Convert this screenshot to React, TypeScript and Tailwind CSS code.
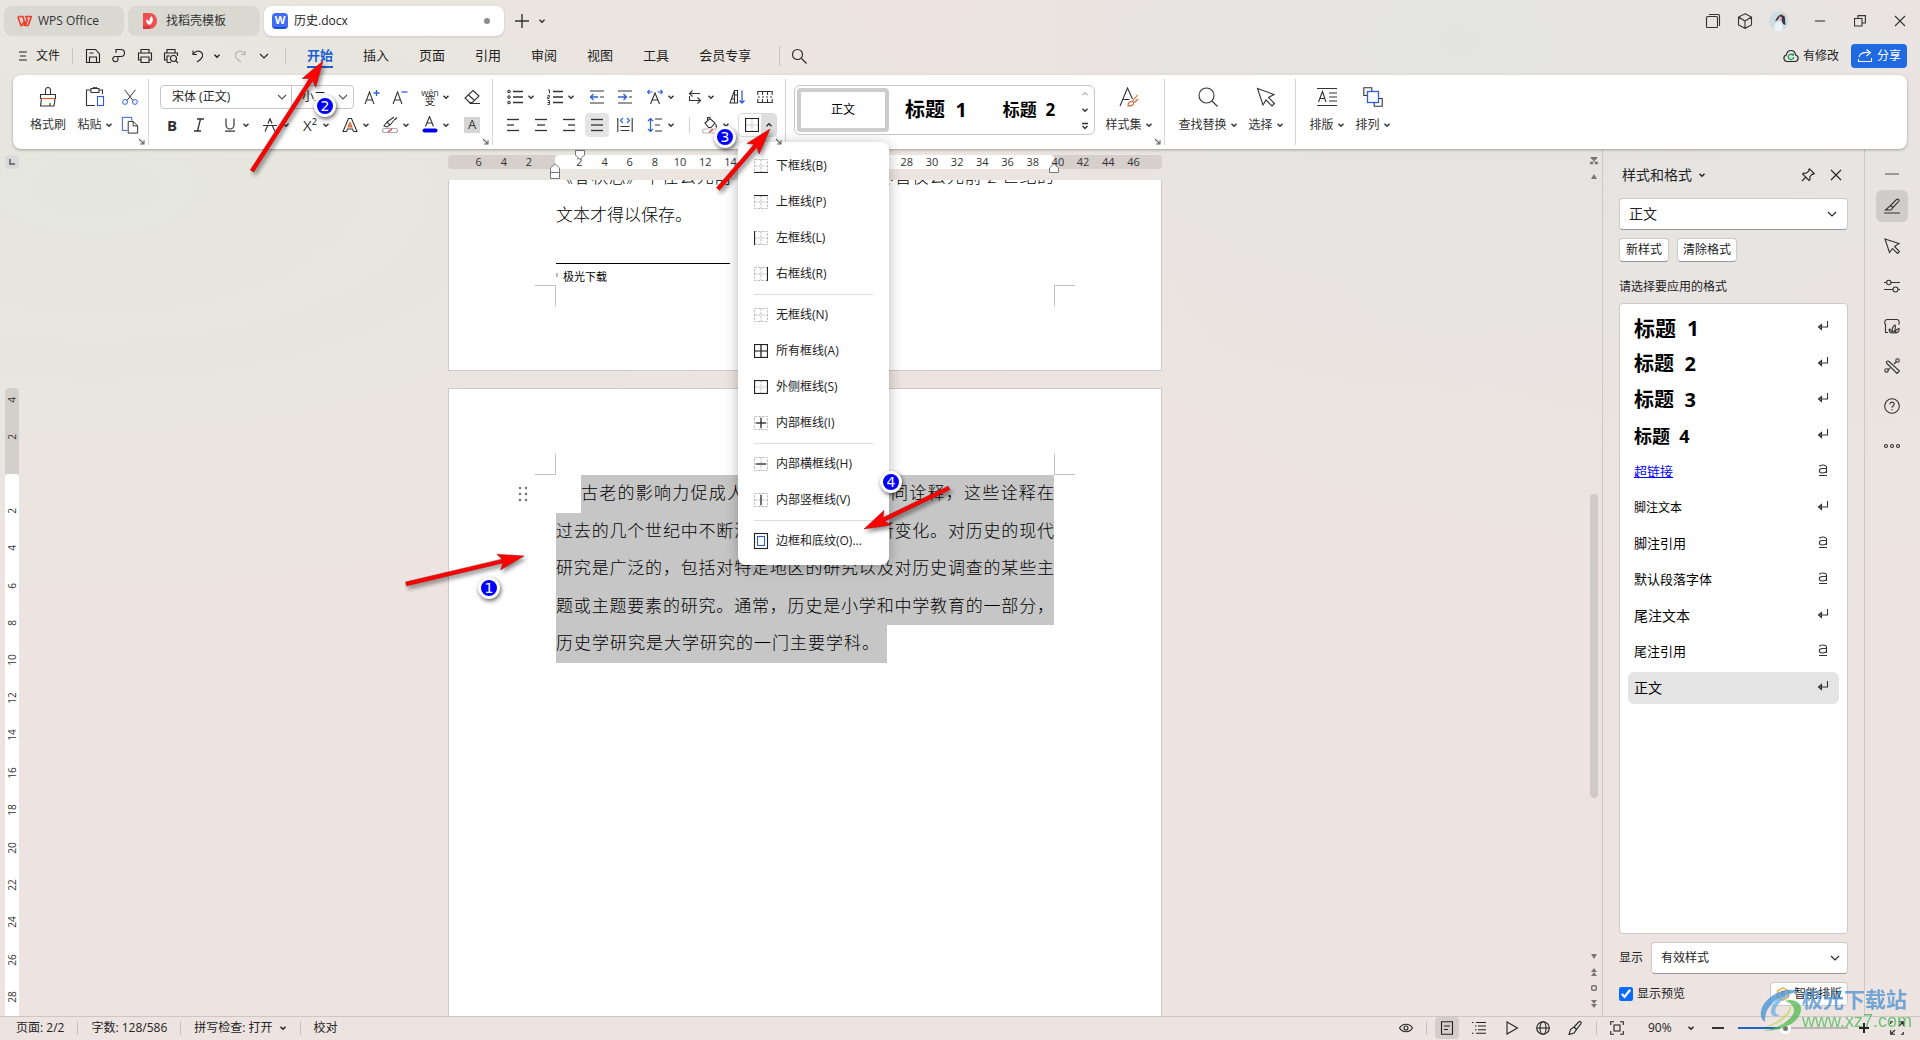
import type { ReactNode } from "react"
import clsx from "clsx"

interface IconProps {
  children: ReactNode
  size?: number
  box?: number
  className?: string
}

function Icon({ children, size = 20, box = 20, className }: IconProps) {
  return (
    <svg
      width={size}
      height={size}
      viewBox={`0 0 ${box} ${box}`}
      fill="none"
      stroke="currentColor"
      strokeWidth={1.1}
      className={clsx("shrink-0", className)}
      aria-hidden="true"
    >
      {children}
    </svg>
  )
}

function Chevron({ up = false, className }: { up?: boolean; className?: string }) {
  return (
    <Icon size={8} box={8} className={className}>
      <path d={up ? "M1.5 5.2 4 2.8 6.5 5.2" : "M1.5 2.8 4 5.2 6.5 2.8"} strokeWidth={1.5} />
    </Icon>
  )
}

function WideChevron({ className }: { className?: string }) {
  return (
    <Icon size={10} box={10} className={className}>
      <path d="M1 3 5 7 9 3" />
    </Icon>
  )
}

const BLUE = "#2b5fd9"

/* ---------- title bar ---------- */

function TitleBar() {
  return (
    <header className="flex h-10 shrink-0 items-center justify-between pl-1 pr-3 pt-px text-xs text-[#333]">
      <div className="flex items-center gap-1">
        <button className="flex h-[30px] w-[120px] items-center gap-1 rounded-lg bg-[#d9d9d2] pl-3">
          <Icon size={18} className="text-[#f5382c]">
            <path d="M3 5h4.500l3 9 2-5-1.500-4h6l-3.500 10H10L8.500 11 7 15H5.500L2 5" strokeWidth={1.8} strokeLinejoin="round" />
          </Icon>
          WPS Office
        </button>
        <button className="flex h-[30px] w-[132px] items-center gap-2 rounded-lg bg-[#d9d9d2] pl-[14px]">
          <Icon size={16} box={16}>
            <path d="M1 0h6.500a7.500 8 0 0 1 0 16H1z" fill="#f04d52" stroke="none" />
            <path d="M1 13h8l-2 3H1z" fill="#d93440" stroke="none" />
            <path d="M8 12C4.500 11 4 8.500 4.500 6.500 6 7 7.500 8 7.500 10 7 7.500 7.500 4.500 9.500 3c2 2.500 2 6-1.500 9Z" fill="#fff" stroke="none" />
          </Icon>
          找稻壳模板
        </button>
        <button className="flex h-[30px] w-[240px] items-center rounded-lg bg-white pl-2 pr-[14px] text-[#222] shadow-sm">
          <span className="flex size-4 items-center justify-center rounded-sm border-b-2 border-[#1d4fd0] bg-[#3f6cf6] text-[11px] font-bold leading-none text-white">
            W
          </span>
          <span className="ml-[6px] flex-1 text-left">历史.docx</span>
          <span className="size-[6px] rounded-full bg-[#8c8c8c]" />
        </button>
        <button aria-label="新建标签" className="ml-[2px] flex h-6 w-6 items-center justify-center">
          <Icon size={14} box={14}>
            <path d="M7 0v14M0 7h14" strokeWidth={1.4} />
          </Icon>
        </button>
        <button aria-label="标签列表" className="flex h-6 items-center">
          <Chevron />
        </button>
      </div>
      <div className="flex items-center">
        <button aria-label="窗口" className="flex w-8 justify-center">
          <Icon size={16} box={16}>
            <rect x="1.500" y="3.500" width="11" height="11" rx="1" />
            <path d="M4 1.500h9.500a1 1 0 0 1 1 1V13" />
          </Icon>
        </button>
        <button aria-label="应用" className="flex w-8 justify-center">
          <Icon size={16} box={16}>
            <path d="M8 .8 14.500 4v8L8 15.300 1.500 12V4ZM1.500 4 8 8l6.500-4M8 8v7" />
          </Icon>
        </button>
        <button aria-label="账号" className="ml-2 flex justify-center">
          <svg width="20" height="20" viewBox="0 0 20 20" aria-hidden="true">
            <circle cx="10" cy="10" r="10" fill="#cfdde3" />
            <path d="M5 19c0-5 2-8 6-9l2 4 1 5c-3 1.500-6 1.500-9 0Z" fill="#eaf4f6" />
            <path d="M10 4.500c2.500-2 6-.5 6 3l.5 6.500-2.500-1-1.500-4-2-2.500-2.500 3-2 1c1-2.500 2-4.500 4-6Z" fill="#3b3344" />
            <path d="M10 6c1.500-1 3 0 3 1.500L12 10l-2-.5Z" fill="#e0b7ab" />
            <path d="M12 3.500c1.500-.8 3-.2 3.500 1l-1.500.5Z" fill="#d8b056" />
          </svg>
        </button>
        <button aria-label="最小化" className="ml-[21px] flex w-5 justify-center">
          <Icon size={12} box={12}>
            <path d="M1 6h10" />
          </Icon>
        </button>
        <button aria-label="还原" className="ml-5 flex w-5 justify-center">
          <Icon size={12} box={12}>
            <path d="M.5 3.500h7.500v7.500H.5ZM4 3.500V.6h7.400V8H8" />
          </Icon>
        </button>
        <button aria-label="关闭" className="ml-5 mr-[-2px] flex w-5 justify-center">
          <Icon size={12} box={12}>
            <path d="m1 1 10 10M11 1 1 11" />
          </Icon>
        </button>
      </div>
    </header>
  )
}

/* ---------- menu bar ---------- */

const menus = ["开始", "插入", "页面", "引用", "审阅", "视图", "工具", "会员专享"]

function MenuBar() {
  return (
    <nav className="flex h-[35px] shrink-0 items-center justify-between pb-[4px] pl-[18px] pr-[13px] text-xs text-[#222]">
      <div className="flex items-center">
        <button className="flex items-center gap-2">
          <Icon size={10} box={10}>
            <path d="M1 1h8M2 5h6M1 9h8" />
          </Icon>
          文件
        </button>
        <span className="ml-3 h-4 w-px bg-[#c8c6c2]" />
        <div className="ml-3 flex items-center gap-[10px]">
          <button aria-label="保存">
            <Icon size={16} box={16}>
              <path d="M1.500 1.500h9L14.500 6v8.500h-13ZM4.500 14V9h7v5M4.500 5h4" />
            </Icon>
          </button>
          <button aria-label="输出为PDF">
            <Icon size={16} box={16}>
              <path d="M5 5V1.500h5a3.500 3.500 0 0 1 0 7H7v2.700A2.600 2.600 0 1 1 4.400 8.500H7" />
            </Icon>
          </button>
          <button aria-label="打印">
            <Icon size={16} box={16}>
              <path d="M4 5V1.500h8V5M4 12H1.500V5h13v7H12M4 9h8v5.500H4Z" />
            </Icon>
          </button>
          <button aria-label="打印预览">
            <Icon size={16} box={16}>
              <path d="M4 5V1.500h8V5M4 12H1.500V5h13v3M4 14.500V8h3M4 14.500h4" />
              <circle cx="10.500" cy="10.500" r="3" />
              <path d="m12.800 12.800 2.200 2.200" />
            </Icon>
          </button>
        </div>
        <button aria-label="撤销" className="ml-3 flex items-center gap-2">
          <Icon size={14} box={14}>
            <path d="M2 1.500v4h4M2 5.500C4 2 8 1 10.500 3.500S12 9 6 13" />
          </Icon>
          <Chevron />
        </button>
        <button aria-label="恢复" className="ml-3 text-[#b5b3b0]">
          <Icon size={14} box={14}>
            <path d="M12 1.500v4H8M12 5.500C10 2 6 1 3.500 3.500S2 9 8 13" />
          </Icon>
        </button>
        <button aria-label="更多" className="ml-3">
          <WideChevron />
        </button>
        <span className="ml-4 h-4 w-px bg-[#c8c6c2]" />
        <div className="ml-[21px] flex gap-[30px] text-[13px]">
          {menus.map((name, i) => (
            <button
              key={name}
              className={clsx(
                "h-6 border-b-2 leading-[22px]",
                i === 0 ? "border-[#1d5fd0] font-bold text-[#1d5fd0]" : "border-transparent"
              )}
            >
              {name}
            </button>
          ))}
        </div>
        <span className="ml-[28px] h-5 w-px bg-[#c8c6c2]" />
        <button aria-label="搜索" className="ml-[11px]">
          <Icon size={16} box={16}>
            <circle cx="6.500" cy="6.500" r="5" />
            <path d="m10.500 10.500 5 5" />
          </Icon>
        </button>
      </div>
      <div className="flex items-center gap-3">
        <button className="flex items-center gap-1">
          <Icon size={16} box={16}>
            <path d="M4 13.500a3.300 3.300 0 0 1-.6-6.500C3.800 4 5.700 2.500 8 2.500S12.200 4 12.600 7A3.300 3.300 0 0 1 12 13.500Z" />
            <path d="M10 7a2.700 2.700 0 1 0 .7 2M8.500 7H10.300V5.200" stroke="#16a05d" strokeWidth={1.3} />
          </Icon>
          有修改
        </button>
        <button className="flex h-6 w-14 items-center justify-center gap-1 rounded bg-[#1f6ae2] text-white">
          <Icon size={16} box={16}>
            <path d="M2 9C3 5.500 6 4 12 4.500M9.500 1.500l4 3-4 3.500M1.500 11v2.500h13V10" />
          </Icon>
          分享
        </button>
      </div>
    </nav>
  )
}

/* ---------- ribbon ---------- */

interface ToolProps {
  label: string
  children: ReactNode
  className?: string
}

function Tool({ label, children, className, narrow = false }: ToolProps & { narrow?: boolean }) {
  return (
    <button aria-label={label} className={clsx("flex h-6 items-center justify-center", narrow ? "w-6" : "w-7", className)}>
      {children}
    </button>
  )
}

function DropTool({ label, children, className }: ToolProps) {
  return (
    <button aria-label={label} className={clsx("flex h-6 w-10 items-center", className)}>
      <span className="flex w-6 justify-center">{children}</span>
      <Chevron />
    </button>
  )
}

function BigTool({ label, children, className, drop = true }: ToolProps & { drop?: boolean }) {
  return (
    <button className={clsx("flex flex-col items-center gap-1", className)}>
      <span className="flex h-6 items-center">{children}</span>
      <span className="flex h-6 items-center gap-[3px] whitespace-nowrap">
        {label}
        {drop && <Chevron />}
      </span>
    </button>
  )
}

function Group({ children, className, launcher = true }: { children: ReactNode; className?: string; launcher?: boolean }) {
  return (
    <div className={clsx("relative my-1 flex border-r border-[#d4d4d4] pt-[6px]", className)}>
      {children}
      {launcher && (
        <button aria-label="更多设置" className="absolute bottom-0 right-[3px] text-[#666]">
          <Icon size={7} box={7}>
            <path d="m1 1 5 5M6 2v4H2" />
          </Icon>
        </button>
      )}
    </div>
  )
}

function Lines({ rows }: { rows: [number, number][] }) {
  return (
    <Icon size={16} box={16}>
      {rows.map(([from, to], i) => (
        <path key={i} d={`M${from} ${2.5 + i * 5.5}H${to}`} strokeWidth={1.3} />
      ))}
    </Icon>
  )
}

type Edge = "b" | "t" | "l" | "r" | "h" | "v"

const edgePaths: Record<Edge, string> = {
  b: "M0 13.500h14",
  t: "M0 .5h14",
  l: "M.5 0v14",
  r: "M13.500 0v14",
  h: "M2 7h10",
  v: "M7 2v10",
}

function BorderIcon({ edges, full = false }: { edges: Edge[]; full?: boolean }) {
  return (
    <Icon size={14} box={14}>
      <path d="M.5.5h13v13H.5ZM.5 7h13M7 .5v13" stroke="#bdbdbd" strokeWidth={1} strokeDasharray="2.500 1.200" />
      {edges.map((edge) => (
        <path key={edge} d={edgePaths[edge]} stroke="#222" strokeWidth={1.2} />
      ))}
      {full && <path d="M7 0v14M0 7h14" stroke="#222" strokeWidth={1.2} />}
    </Icon>
  )
}

interface BorderOption {
  label: string
  edges: Edge[]
  full?: boolean
}

const borderOptions: BorderOption[][] = [
  [
    { label: "下框线(B)", edges: ["b"] },
    { label: "上框线(P)", edges: ["t"] },
    { label: "左框线(L)", edges: ["l"] },
    { label: "右框线(R)", edges: ["r"] },
  ],
  [
    { label: "无框线(N)", edges: [] },
    { label: "所有框线(A)", edges: ["b", "t", "l", "r"], full: true },
    { label: "外侧框线(S)", edges: ["b", "t", "l", "r"] },
    { label: "内部框线(I)", edges: ["h", "v"] },
  ],
  [
    { label: "内部横框线(H)", edges: ["h"] },
    { label: "内部竖框线(V)", edges: ["v"] },
  ],
]

function BorderMenu() {
  return (
    <div
      role="menu"
      className="absolute left-0 top-[29px] w-[151px] rounded-lg bg-white py-[6px] text-xs text-[#222] shadow-[0_2px_14px_rgba(0,0,0,0.28)]"
    >
      {borderOptions.map((section, i) => (
        <div key={i}>
          {section.map((option) => (
            <button key={option.label} role="menuitem" className="flex h-9 w-full items-center gap-2 pl-4">
              <BorderIcon edges={option.edges} full={option.full} />
              {option.label}
            </button>
          ))}
          <hr className="mx-4 my-[2px] border-[#dcdcdc]" />
        </div>
      ))}
      <button role="menuitem" className="flex h-9 w-full items-center gap-2 pl-4">
        <Icon size={14} box={14} className="overflow-visible">
          <rect x=".5" y="-.5" width="13" height="15" stroke="#222" />
          <rect x="3.500" y="2.500" width="7" height="9" stroke={BLUE} />
        </Icon>
        边框和底纹(O)...
      </button>
    </div>
  )
}

function ClipboardGroup() {
  return (
    <Group className="pl-[11px] pr-[6px]">
      <BigTool label="格式刷" drop={false} className="w-12">
        <Icon>
          <path d="M2.500 7.500h15v4h-15ZM7.500 7.500V3a2.500 2.500 0 0 1 5 0v4.500M3.500 11.500 2.500 19h13.500l1-7.500M12 19v-3M5 19" />
          <path d="M3 11.500h14" stroke="#d1622d" />
        </Icon>
      </BigTool>
      <BigTool label="粘贴" className="w-[46px]">
        <Icon>
          <path d="M6 3H1.500v15.500H10M14 3h3.500v4M6 1.500h8v4H6ZM8.500 1.500V.3h3v1.200" />
          <rect x="12.500" y="9.500" width="6" height="9" stroke={BLUE} />
        </Icon>
      </BigTool>
      <div className="flex flex-col gap-1">
        <Tool label="剪切" narrow>
          <Icon size={18}>
            <path d="M4 2 13.500 14M16 2 6.500 14" />
            <circle cx="4.500" cy="15.500" r="2.700" stroke={BLUE} />
            <circle cx="15.500" cy="15.500" r="2.700" stroke={BLUE} />
          </Icon>
        </Tool>
        <Tool label="复制" narrow>
          <Icon size={18}>
            <path d="M7 16H1.500V1.500H12V5" stroke={BLUE} />
            <path d="M8 6h5.500l5 5v8H8ZM13.500 6v5h5" />
          </Icon>
        </Tool>
      </div>
    </Group>
  )
}

function FontGroup() {
  return (
    <Group className="pl-[11px] pr-[6px]">
      <div className="flex flex-col gap-1">
        <div className="flex items-center">
          <div className="flex h-6 rounded border border-[#c6c6c6] text-[#222]">
            <div className="relative w-[131px] border-r border-[#c6c6c6]">
              <select aria-label="字体" className="h-full w-full appearance-none bg-transparent pl-[11px] outline-none">
                <option>宋体 (正文)</option>
              </select>
              <WideChevron className="pointer-events-none absolute right-1 top-[6px] text-[#555]" />
            </div>
            <div className="relative w-[61px]">
              <select aria-label="字号" className="h-full w-full appearance-none bg-transparent pl-[10px] outline-none">
                <option>小二</option>
              </select>
              <WideChevron className="pointer-events-none absolute right-[5px] top-[6px] text-[#555]" />
            </div>
          </div>
          <Tool label="增大字号" className="ml-1">
            <Icon size={16} box={16}>
              <path d="m1 15 4.500-12L10 15M2.500 11h6" />
              <path d="M12.500 1v6M9.500 4h6" stroke={BLUE} strokeWidth={1.3} />
            </Icon>
          </Tool>
          <Tool label="减小字号">
            <Icon size={16} box={16}>
              <path d="m1 15 4.500-12L10 15M2.500 11h6" />
              <path d="M9.500 3h6" stroke={BLUE} strokeWidth={1.3} />
            </Icon>
          </Tool>
          <DropTool label="拼音指南" className="ml-1">
            <span className="flex flex-col items-center leading-none">
              <span className="text-[9px] leading-[7px]">wén</span>
              <span className="text-[11px] leading-[10px]">变</span>
            </span>
          </DropTool>
          <Tool label="清除格式">
            <Icon size={16} box={16}>
              <path d="M9 1.500 15 7l-6.500 6.500H5.500L1 9ZM4 5.500l6.500 6M5.500 14.500H16" />
            </Icon>
          </Tool>
        </div>
        <div className="flex items-center">
          <Tool label="加粗" narrow className="text-[15px] font-bold">B</Tool>
          <Tool label="倾斜" narrow className="ml-[3px]">
            <Icon size={14} box={14}>
              <path d="M5 1h7M2 13h7M8.500 1l-3 12" strokeWidth={1.3} />
            </Icon>
          </Tool>
          <DropTool label="下划线" className="ml-[7px]">
            <Icon size={14} box={14}>
              <path d="M3 .5v6.500a4 4 0 0 0 8 0V.5M2 13.200h10" strokeWidth={1.2} />
            </Icon>
          </DropTool>
          <DropTool label="删除线">
            <Icon size={14} box={14}>
              <path d="M2 13.500 4.500 8M12 13.500 9.500 8M5 5.500 7 .8l2 4.700M0 7.500h14" strokeWidth={1.2} />
            </Icon>
          </DropTool>
          <DropTool label="上标">
            <span className="text-[15px]">X²</span>
          </DropTool>
          <DropTool label="文字效果">
            <Icon size={16} box={16}>
              <path d="M1 14.500 6.500 1.500h3L15 14.500h-3.500L10.500 12h-5l-1 2.500Z" />
              <path d="m8 5.500 2 4.500H6Z" fill="#e8a37e" stroke="#d1622d" />
            </Icon>
          </DropTool>
          <DropTool label="突出显示">
            <Icon size={18} box={18}>
              <path d="m3 10 3-4 3 3-3 2ZM6 6l7-5M9 9l5-6M14 3.500l2-2" />
              <rect x="1.500" y="12.500" width="15" height="4" rx="2" stroke="#aaa" />
              <path d="m7 16 4-3" stroke="#e33" />
            </Icon>
          </DropTool>
          <DropTool label="字体颜色">
            <Icon size={18} box={18}>
              <path d="m4.500 10.500 4-10 4 10M6 7h5.500" />
              <rect x="1.500" y="12.500" width="15" height="4" rx="2" fill="#0000f0" stroke="none" />
            </Icon>
          </DropTool>
          <Tool label="字符底纹">
            <span className="flex h-4 w-4 items-center justify-center bg-[#d5d5d5] text-[13px]">A</span>
          </Tool>
        </div>
      </div>
    </Group>
  )
}

function ParagraphGroup() {
  return (
    <Group className="pl-[6px] pr-[6px]">
      <div className="flex flex-col gap-1">
        <div className="flex items-center pl-1">
          <DropTool label="项目符号">
            <Icon size={16} box={16}>
              <path d="M6 2.500h10M6 8h10M6 13.500h10" strokeWidth={1.3} />
              <circle cx="2" cy="2.500" r="1.200" />
              <circle cx="2" cy="8" r="1.200" />
              <circle cx="2" cy="13.500" r="1.200" />
            </Icon>
          </DropTool>
          <DropTool label="编号">
            <Icon size={16} box={16}>
              <path d="M6 2.500h10M6 8h10M6 13.500h10" strokeWidth={1.3} />
              <path d="M1 1h1.500v3.500M.5 6.500h2v1.500h-2v1.500h2M.5 11.500h2v4h-2M.5 13.500h2" strokeWidth={0.9} />
            </Icon>
          </DropTool>
          <Tool label="减少缩进">
            <Icon size={16} box={16}>
              <path d="M1 2h14M11 8h4M1 14h14" strokeWidth={1.2} />
              <path d="M9 8H2M4.500 5 1.500 8l3 3" stroke={BLUE} strokeWidth={1.3} />
            </Icon>
          </Tool>
          <Tool label="增加缩进">
            <Icon size={16} box={16}>
              <path d="M1 2h14M12 8h3M1 14h14" strokeWidth={1.2} />
              <path d="M1 8h8M6.500 5l3 3-3 3" stroke={BLUE} strokeWidth={1.3} />
            </Icon>
          </Tool>
          <DropTool label="字符缩放" className="ml-1">
            <Icon size={16} box={16}>
              <path d="m3.500 15 4.500-11 4.500 11M5 11h6" />
              <path d="M.5 3h5M2.500 1l-2 2 2 2M15.500 3h-5M13.500 1l2 2-2 2" stroke={BLUE} />
            </Icon>
          </DropTool>
          <DropTool label="换行">
            <Icon size={16} box={16}>
              <path d="M13 4.500H2.500M5.500 1.500l-3 3 3 3M2.500 7v4.500h11M10.500 8.500l3 3-3 3" />
            </Icon>
          </DropTool>
          <Tool label="排序">
            <Icon size={16} box={16}>
              <path d="M1 14 5.500 1.500v12.500ZM3 10h2.500M5.500 1.500h3v12.500h-3M5.500 6h3" />
              <path d="M13 1.500V14M10.500 11.500 13 14l2.500-2.500" stroke={BLUE} strokeWidth={1.3} />
            </Icon>
          </Tool>
          <Tool label="制表位">
            <Icon size={16} box={16}>
              <path d="M.8 6V2.500h14.400V6M.8 10v3.500h14.400V10M5.500 2.500V6M10.500 2.500V6M5.500 13.500V10M10.500 13.500V10M.8 8h2M5 8h2M9 8h2M13 8h2" />
            </Icon>
          </Tool>
        </div>
        <div className="flex items-center">
          <Tool label="左对齐"><Lines rows={[[2, 14], [2, 9], [2, 14]]} /></Tool>
          <Tool label="居中"><Lines rows={[[2, 14], [4, 12], [2, 14]]} /></Tool>
          <Tool label="右对齐"><Lines rows={[[2, 14], [7, 14], [2, 14]]} /></Tool>
          <Tool label="两端对齐">
            <span className="flex size-6 items-center justify-center rounded bg-[#e4e4e4]">
              <Lines rows={[[2, 14], [2, 14], [2, 14]]} />
            </span>
          </Tool>
          <Tool label="分散对齐">
            <Icon size={16} box={16}>
              <path d="M.8 1v14M15.200 1v14M3.500 9.500h9M3.500 13.500h9" />
              <path d="M6 1 3.500 3.500 6 6M10 1l2.500 2.500L10 6" stroke={BLUE} />
            </Icon>
          </Tool>
          <DropTool label="行距" className="ml-1">
            <Icon size={16} box={16}>
              <path d="M8 2h7M8 8h5M8 14h7" strokeWidth={1.2} />
              <path d="M3.500 1.500v13M1 4l2.500-2.500L6 4M1 12l2.500 2.500L6 12" stroke={BLUE} strokeWidth={1.2} />
            </Icon>
          </DropTool>
          <span className="ml-[6px] mr-2 h-4 w-px bg-[#d4d4d4]" />
          <DropTool label="底纹颜色">
            <Icon size={18} box={18}>
              <path d="M4 7 9 2.500l5 4.500-4 4.500H7.500ZM6.500 5V1.500h3M14.500 8c1 1.500 1.500 2.500.5 3.500" />
              <rect x="1.500" y="13" width="15" height="4" rx="2" stroke="#bbb" />
              <path d="m8 16.500 4-3" stroke="#e33" />
            </Icon>
          </DropTool>
          <div className="relative">
            <div className="flex h-6 w-[39px] overflow-hidden rounded border border-[#d9d9d9]">
              <button aria-label="边框" className="flex w-[22px] items-center justify-center pl-1">
                <BorderIcon edges={["b", "t", "l", "r"]} />
              </button>
              <button
                aria-label="边框选项"
                aria-haspopup="menu"
                aria-expanded="true"
                className="flex flex-1 items-center justify-center bg-[#dedede]"
              >
                <Chevron up />
              </button>
            </div>
            <BorderMenu />
          </div>
        </div>
      </div>
    </Group>
  )
}

function StylesGroup() {
  return (
    <Group className="pl-2 pr-[5px]">
      <div className="flex h-[50px] w-[301px] items-center gap-px rounded-md border border-[#c8c8c8] pl-[2px] text-black">
        <button className="h-11 w-[92px] rounded border-4 border-[#cdcdcd] text-xs">正文</button>
        <button className="w-[92px] whitespace-pre text-[20px] font-bold">标题  1</button>
        <button className="w-[92px] whitespace-pre text-[17px] font-bold">标题  2</button>
        <div className="flex flex-1 flex-col items-center gap-2 text-[#333]">
          <Chevron up className="text-[#bbb]" />
          <Chevron />
          <Icon size={8} box={8}>
            <path d="M1 1.500h6M1.500 4 4 6.500 6.500 4" strokeWidth={1.400} />
          </Icon>
        </div>
      </div>
      <BigTool label="样式集" className="ml-1 w-[60px]">
        <Icon>
          <path d="M1 19 8.500 1l5 11M4 12.500h6.500" />
          <path d="m18.500 8-5 6M19 12l-3.500 3.500M9 19c0-3 1.500-4.500 4-4.500 1.500 0 2 1 1.500 2.500-.7 1.800-2.500 2-5.500 2Z" stroke="#d1622d" />
        </Icon>
      </BigTool>
    </Group>
  )
}

function Ribbon() {
  return (
    <section className="relative z-20 mx-[13px] flex h-[74px] shrink-0 rounded-lg bg-white text-xs text-[#333] shadow-[0_1px_3px_rgba(0,0,0,0.3)]">
      <ClipboardGroup />
      <FontGroup />
      <ParagraphGroup />
      <StylesGroup />
      <Group className="pl-2 pr-[6px]" launcher={false}>
        <BigTool label="查找替换" className="w-[70px]">
          <Icon>
            <circle cx="8.500" cy="8.500" r="7.500" />
            <path d="m14 14 5.500 5.500" />
          </Icon>
        </BigTool>
        <BigTool label="选择" className="w-[46px]">
          <Icon>
            <path d="M1.500 1.500 18 7.500l-5.500 3 6 6-2.500 2.500-6-6-3 5Z" />
          </Icon>
        </BigTool>
      </Group>
      <div className="flex pl-2 pt-[10px]">
        <BigTool label="排版" className="w-[46px]">
          <Icon>
            <path d="M0 1.500h20M0 18.500h20M1.500 15 5.500 4.500 9 15M2.500 11.500h5.500M12 6h8M12 10h8M12 14h8" />
          </Icon>
        </BigTool>
        <BigTool label="排列" className="w-[46px]">
          <Icon>
            <path d="M4 8.500H.8V.8h8V4M16 11.500h3.200v7.700h-8V16" />
            <rect x="4.500" y="4.500" width="11" height="11" stroke={BLUE} strokeWidth={1.3} />
          </Icon>
        </BigTool>
      </div>
    </section>
  )
}

/* ---------- document ---------- */

const rulerMarks = [6, 4, 2, 0, ...Array.from({ length: 23 }, (_, i) => (i + 1) * 2)]

function HorizontalRuler() {
  return (
    <div className="relative mx-auto flex h-[14px] w-[714px] shrink-0 rounded bg-[#d6cfcc] text-[11px] leading-[14px] text-[#333]">
      <div className="absolute inset-y-0 left-[107px] right-[108px] rounded bg-white" />
      <div className="relative flex flex-1 pl-[18px] pr-4">
        {rulerMarks.map((mark, i) => (
          <span key={i} className="flex-1 basis-0 text-center">
            {mark || ""}
          </span>
        ))}
      </div>
      <svg width="12" height="12" viewBox="0 0 12 12" className="absolute left-[126px] top-[-6px]" fill="#fff" stroke="#777" aria-hidden="true">
        <path d="M1.500 1.500h9v4.500L6 10.500 1.500 6Z" />
      </svg>
      <svg width="12" height="18" viewBox="0 0 12 18" className="absolute left-[101px] top-2" fill="#fff" stroke="#777" aria-hidden="true">
        <path d="M1.500 9.500V5L6 .8 10.500 5v4.500ZM1.500 9.500h9v6h-9Z" />
      </svg>
      <svg width="12" height="12" viewBox="0 0 12 12" className="absolute left-[600px] top-2" fill="#fff" stroke="#777" aria-hidden="true">
        <path d="M1.500 9.500V5L6 .8 10.500 5v4.500Z" />
      </svg>
    </div>
  )
}

function VerticalRuler() {
  return (
    <div className="flex w-5 shrink-0 flex-col pl-[5px] pr-px pt-[6px] text-[10px] leading-none text-[#333]">
      <span className="flex h-[14px] items-center justify-center rounded bg-[#dadada]">
        <Icon size={6} box={6} className="text-[#777]">
          <path d="M1 0v5h5" strokeWidth={2} />
        </Icon>
      </span>
      <div className="mt-[219px] flex h-[86px] flex-col rounded-t bg-[#d3cfc9]">
        <span className="flex h-6 items-center justify-center"><span className="-rotate-90">4</span></span>
        <span className="flex h-[50px] items-center justify-center"><span className="-rotate-90">2</span></span>
      </div>
      <div className="flex flex-1 flex-col rounded-t bg-white pt-[18px]">
        {Array.from({ length: 14 }, (_, i) => (
          <span key={i} className="flex flex-1 items-center justify-center">
            <span className="-rotate-90">{(i + 1) * 2}</span>
          </span>
        ))}
      </div>
    </div>
  )
}

const selectedLines = [
  "过去的几个世纪中不断演变，今天仍在不断变化。对历史的现代",
  "研究是广泛的，包括对特定地区的研究以及对历史调查的某些主",
  "题或主题要素的研究。通常，历史是小学和中学教育的一部分，",
]

const lineClass = "flex-1 whitespace-nowrap bg-[#c6c6c6] leading-9 [text-align-last:justify]"

function Document() {
  return (
    <div className="flex min-w-0 flex-1 flex-col pt-[6px]">
      <HorizontalRuler />
      <div className="mx-auto mt-[11px] flex min-h-0 w-[714px] flex-1 flex-col text-[17px] font-light text-black">
        <article className="flex h-[191px] shrink-0 flex-col justify-end overflow-hidden border-x border-b border-[#cfcaca] bg-white">
          <div className="mx-[107px] shrink-0 leading-[38px]">
            <p className="whitespace-nowrap [text-align-last:justify]">《春秋志》早在公元前 722 年就已写成，尽管仅公元前 2 世纪的</p>
            <p>文本才得以保存。</p>
            <hr className="mt-[29px] w-[174px] border-black" />
            <p className="mt-[5px] flex h-4 items-center gap-[5px] text-[11px] font-normal leading-4">
              <span className="mb-1 h-1 w-[2px] border-r border-[#9cc8e8] bg-[#f2a48a]" />
              极光下载
            </p>
          </div>
          <div className="mx-[86px] mb-16 flex shrink-0 justify-between">
            <span className="size-[21px] border-r border-t border-[#c0c0c0]" />
            <span className="size-[21px] border-l border-t border-[#c0c0c0]" />
          </div>
        </article>
        <article className="relative mt-[17px] min-h-0 flex-1 overflow-hidden border-x border-t border-[#cfcaca] bg-white pt-[65px]">
          <div className="mx-[86px] flex justify-between">
            <span className="size-[21px] border-b border-r border-[#c0c0c0]" />
            <span className="size-[21px] border-b border-l border-[#c0c0c0]" />
          </div>
          <svg width="10" height="16" viewBox="0 0 10 16" className="absolute left-[69px] top-[97px]" fill="#777" aria-hidden="true">
            {[2, 8, 14].map((y) => (
              <g key={y}>
                <circle cx="2" cy={y} r="1.300" />
                <circle cx="8" cy={y} r="1.300" />
              </g>
            ))}
          </svg>
          <div className="mx-[107px] flex h-[188px] flex-col">
            <p className={clsx(lineClass, "ml-[25px]")}>古老的影响力促成人们对历史本质的不同诠释，这些诠释在</p>
            {selectedLines.map((line) => (
              <p key={line} className={lineClass}>{line}</p>
            ))}
            <p className={clsx(lineClass, "mr-[167px] pr-2")}>历史学研究是大学研究的一门主要学科。</p>
          </div>
        </article>
      </div>
    </div>
  )
}

function Scrollbar() {
  return (
    <div className="flex w-3 shrink-0 flex-col items-center pb-2 pr-1 pt-2 text-[#777]">
      <Icon size={8} box={10}>
        <path d="M1 0h8v2L6 4v2H4V4L1 2ZM0 6h4v3H0ZM6 6h4v3H6Z" fill="currentColor" stroke="none" />
      </Icon>
      <Icon size={8} box={8} className="mt-2">
        <path d="m4 1 3 5H1Z" fill="currentColor" stroke="none" />
      </Icon>
      <div className="flex w-full flex-1 flex-col pt-[313px]">
        <span className="h-[304px] rounded bg-[#d0cac8]" />
      </div>
      <div className="flex flex-col gap-2">
        <Icon size={8} box={8}><path d="M1 2h6L4 7Z" fill="currentColor" stroke="none" /></Icon>
        <Icon size={8} box={8}><path d="m4 0 3 4H1ZM4 4l3 4H1Z" fill="currentColor" stroke="none" /></Icon>
        <Icon size={8} box={8}><rect x="1.700" y="1.700" width="4.600" height="4.600" rx="1" strokeWidth={1.500} /></Icon>
        <Icon size={8} box={8}><path d="M1 0h6L4 4ZM1 4h6L4 8Z" fill="currentColor" stroke="none" /></Icon>
      </div>
    </div>
  )
}

/* ---------- style panel ---------- */

interface StyleEntry {
  name: string
  kind: "para" | "char"
  className: string
}

const styleEntries: StyleEntry[] = [
  { name: "标题  1", kind: "para", className: "text-[21px] font-bold" },
  { name: "标题  2", kind: "para", className: "text-[20px] font-bold" },
  { name: "标题  3", kind: "para", className: "text-[20px] font-bold" },
  { name: "标题  4", kind: "para", className: "text-[18px] font-bold" },
  { name: "超链接", kind: "char", className: "text-[13px] text-[#0000ff] underline" },
  { name: "脚注文本", kind: "para", className: "text-xs" },
  { name: "脚注引用", kind: "char", className: "text-[13px]" },
  { name: "默认段落字体", kind: "char", className: "text-[13px]" },
  { name: "尾注文本", kind: "para", className: "text-sm" },
  { name: "尾注引用", kind: "char", className: "text-[13px]" },
  { name: "正文", kind: "para", className: "text-sm" },
]

function StyleMark({ kind }: { kind: StyleEntry["kind"] }) {
  return (
    <Icon size={12} box={12} className="mb-1 text-[#333]">
      {kind === "para" ? (
        <path d="M10.500 1v6H2M4.500 4.500 1.500 7l3 2.500Z" fill="none" />
      ) : (
        <path d="M2.500 2.500C3 .5 9 .3 9.500 3v6M9.500 4.500H5C1.500 4.500 1.500 9 5 9s4.500-1.500 4.500-2.500M2 11.500h8" />
      )}
    </Icon>
  )
}

function StylePanel() {
  return (
    <aside className="flex w-[263px] shrink-0 flex-col border-x border-[#cdc9c7] pb-[10px] pl-4 pr-4 pt-3 text-xs text-[#222]">
      <div className="flex h-7 items-center">
        <h2 className="flex items-center gap-[6px] pl-[3px] text-sm">
          样式和格式
          <Chevron />
        </h2>
        <button aria-label="固定" className="ml-auto">
          <Icon size={14} box={14}>
            <path d="m8.500.8 4.700 4.700-1.200.8-.9-.2-2.300 2.800.2 2.600-1 .9-6.400-6.400 1-1 2.600.2L8 2.900l-.3-1.200ZM4.500 9.500.8 13.200" />
          </Icon>
        </button>
        <button aria-label="关闭面板" className="ml-[15px] mr-[6px]">
          <Icon size={12} box={12}>
            <path d="m1 1 10 10M11 1 1 11" />
          </Icon>
        </button>
      </div>
      <div className="relative mt-[9px] h-8 rounded border border-b-[#999] border-[#cfcaca] bg-white">
        <select aria-label="当前样式" className="h-full w-full appearance-none bg-transparent pl-[9px] text-sm outline-none">
          <option>正文</option>
        </select>
        <WideChevron className="pointer-events-none absolute right-[10px] top-[10px]" />
      </div>
      <div className="mt-2 flex gap-2">
        <button className="h-6 w-[50px] rounded border border-b-[#999] border-[#cfcaca] bg-white">新样式</button>
        <button className="h-6 w-[60px] rounded border border-b-[#999] border-[#cfcaca] bg-white">清除格式</button>
      </div>
      <p className="mt-4 leading-[18px]">请选择要应用的格式</p>
      <ul className="mt-[7px] min-h-0 flex-1 rounded border border-[#cfcaca] bg-white px-2 pt-[6px] text-black">
        {styleEntries.map((entry, i) => (
          <li key={entry.name} className="flex h-9 items-center">
            <button
              className={clsx(
                "flex h-8 w-full items-center justify-between rounded-md pl-[6px] pr-[10px]",
                i === styleEntries.length - 1 && "bg-[#e4e4e4]"
              )}
            >
              <span className={clsx("whitespace-pre", entry.className)}>{entry.name}</span>
              <StyleMark kind={entry.kind} />
            </button>
          </li>
        ))}
      </ul>
      <div className="mt-2 flex items-center gap-2">
        <label htmlFor="show">显示</label>
        <div className="relative h-8 flex-1 rounded border border-b-[#999] border-[#cfcaca] bg-white">
          <select id="show" className="h-full w-full appearance-none bg-transparent pl-[9px] outline-none">
            <option>有效样式</option>
          </select>
          <WideChevron className="pointer-events-none absolute right-[7px] top-[10px]" />
        </div>
      </div>
      <div className="mt-2 flex items-center justify-between">
        <label className="flex items-center gap-1">
          <input type="checkbox" defaultChecked className="size-[14px] accent-[#0a6cff]" />
          显示预览
        </label>
        <button className="flex h-6 w-[78px] items-center justify-center gap-1 rounded border border-[#cfcaca] bg-white">
          <Icon size={14} box={14} className="text-[#f0a030]">
            <path d="M7 .8 12.500 4v6L7 13.200 1.500 10V4ZM9 4.500H6L5 6l4 2-1 1.500H5" strokeWidth={1.3} />
          </Icon>
          智能排版
        </button>
      </div>
    </aside>
  )
}

const sideTools: { label: string; drawing: ReactNode }[] = [
  {
    label: "选择",
    drawing: <path d="M1 1 15 5.500l-4.500 3 5 5-2 2-5-5-3 4Z" />,
  },
  {
    label: "属性",
    drawing: (
      <>
        <path d="M0 4.500h2.500M7 4.500h9M0 11.500h9M14 11.500h2" />
        <circle cx="4.800" cy="4.500" r="2.200" />
        <circle cx="11.500" cy="11.500" r="2.500" />
      </>
    ),
  },
  {
    label: "稻壳资源",
    drawing: (
      <path d="M4 14.500H1.500V6.500C0 5 1 1.500 3 1.500h10c2 0 3 3.500 1.500 5M7 15c-2-1-2-3-1.500-4 1.500.5 2 2 1.500 4ZM9 15c-1.500-3-.5-7 2-8 1 3 0 6-2 8ZM11 15c.5-2 1.500-4 4-4.500.5 2.500-1 4.500-4 4.500Z" />
    ),
  },
  {
    label: "工具箱",
    drawing: (
      <>
        <path d="M5 3.500 15.500 13 13 15.500 3 5.500C1.500 4 3.500 2 5 3.500ZM10 6l2-2M6 10l-2 2" />
        <circle cx="13.500" cy="2.500" r="1.700" />
        <circle cx="2.500" cy="12.500" r="1.700" />
      </>
    ),
  },
  {
    label: "帮助",
    drawing: (
      <>
        <circle cx="8" cy="8" r="7.300" />
        <path d="M5.800 6.300C6 3.500 10.200 3.500 10.200 6c0 1.700-2.200 1.800-2.200 3.700M8 11v1.300" />
      </>
    ),
  },
  {
    label: "更多",
    drawing: (
      <>
        <circle cx="2" cy="8" r="1.500" />
        <circle cx="8" cy="8" r="1.500" />
        <circle cx="14" cy="8" r="1.500" />
      </>
    ),
  },
]

function SideBar() {
  return (
    <div className="flex w-[55px] shrink-0 flex-col items-center gap-2 pr-px pt-[17px] text-[#333]">
      <button aria-label="收起" className="flex h-4 w-8 items-center justify-center">
        <span className="h-[2px] w-[14px] bg-[#999]" />
      </button>
      <button aria-label="样式" className="flex h-8 w-8 items-center justify-center rounded-md bg-[#d0ccc9]">
        <Icon size={16} box={16}>
          <path d="M12.500 1.500c1.500-1 3 .3 2.300 1.800L9 9.500 6.500 7.500ZM6.500 7.500 9 9.500l-2 2.500H1.500ZM0 15h16" />
        </Icon>
      </button>
      {sideTools.map((tool) => (
        <button key={tool.label} aria-label={tool.label} className="flex h-8 w-8 items-center justify-center">
          <Icon size={16} box={16}>{tool.drawing}</Icon>
        </button>
      ))}
    </div>
  )
}

/* ---------- status bar ---------- */

function Divider({ className }: { className?: string }) {
  return <span className={clsx("h-[14px] w-px bg-[#c8c2c0]", className)} />
}

function StatusBar() {
  return (
    <footer className="flex h-6 shrink-0 items-center justify-between border-t border-[#cdc6c4] pb-px pl-4 pr-4 text-xs text-[#222]">
      <div className="flex items-center gap-[13px]">
        <span>页面: 2/2</span>
        <Divider />
        <span>字数: 128/586</span>
        <Divider />
        <button className="flex items-center gap-[6px]">
          拼写检查: 打开
          <Chevron />
        </button>
        <Divider />
        <button>校对</button>
      </div>
      <div className="flex items-center">
        <button aria-label="护眼模式">
          <Icon size={14} box={14}>
            <path d="M.5 7C3.500 2 10.500 2 13.500 7 10.500 12 3.500 12 .5 7Z" />
            <circle cx="7" cy="7" r="2" />
          </Icon>
        </button>
        <Divider className="ml-[13px]" />
        <button aria-label="页面视图" className="ml-2 flex h-[22px] w-6 items-center justify-center rounded bg-[#d5cdcb]">
          <Icon size={14} box={14}>
            <path d="M1.500.7h11v12.600h-11ZM4 5h6M4 8.500h4" />
          </Icon>
        </button>
        <button aria-label="大纲" className="ml-[13px]">
          <Icon size={14} box={14}>
            <path d="M0 1.500h1.500M4 1.500h10M3 5h1.500M6 5h8M3 8.700h1.500M6 8.700h8M0 12.300h1.500M4 12.300h10" />
          </Icon>
        </button>
        <button aria-label="阅读版式" className="ml-[19px]">
          <Icon size={14} box={14}>
            <path d="M2 1 12.500 7 2 13Z" />
          </Icon>
        </button>
        <button aria-label="Web版式" className="ml-[17px]">
          <Icon size={14} box={14}>
            <circle cx="7" cy="7" r="6.300" />
            <ellipse cx="7" cy="7" rx="3" ry="6.300" />
            <path d="M.7 7h12.600" />
          </Icon>
        </button>
        <button aria-label="写作模式" className="ml-[18px]">
          <Icon size={14} box={14}>
            <path d="M6 6 11 .8c1.500-.8 2.700.5 2 1.800L8.500 8.500ZM6 6l2.500 2.500L6 12 1 13.500 2.500 8.500Z" />
          </Icon>
        </button>
        <Divider className="ml-[14px]" />
        <button aria-label="最佳缩放" className="ml-[13px]">
          <Icon size={14} box={14}>
            <path d="M.7 4V.7H4M10 .7h3.300V4M13.300 10v3.300H10M4 13.300H.7V10" />
            <rect x="4" y="4" width="6" height="6" />
          </Icon>
        </button>
        <button className="ml-6 flex w-[47px] items-center justify-between">
          90%
          <Chevron />
        </button>
        <button aria-label="缩小" className="ml-[17px] flex h-3 w-3 items-center">
          <span className="block h-[2px] w-3 bg-[#333]" />
        </button>
        <input
          type="range"
          aria-label="缩放"
          min={10}
          max={200}
          defaultValue={90}
          className="ml-[14px] h-[2px] w-[110px] appearance-none bg-[#bdb6b4] bg-[linear-gradient(to_right,#1f62cc_43%,#bdb6b4_43%)] [&::-webkit-slider-thumb]:size-[11px] [&::-webkit-slider-thumb]:appearance-none [&::-webkit-slider-thumb]:rounded-full [&::-webkit-slider-thumb]:border-[3px] [&::-webkit-slider-thumb]:border-white [&::-webkit-slider-thumb]:bg-[#777]"
        />
        <button aria-label="放大" className="ml-[10px]">
          <Icon size={12} box={12}>
            <path d="M6 1v10M1 6h10" strokeWidth={2} />
          </Icon>
        </button>
        <button aria-label="全屏" className="ml-5">
          <Icon size={14} box={14}>
            <path d="M9 .7h4.300V5M13 1 9 5M5 13.300H.7V9M1 13l4-4M.7 3V.7H3M11 13.300h2.300V11" />
          </Icon>
        </button>
      </div>
    </footer>
  )
}

/* ---------- annotations ---------- */

const arrows = [
  { from: [406, 584], to: [524, 556] },
  { from: [252, 171], to: [323, 61] },
  { from: [718, 189], to: [770, 129] },
  { from: [949, 488], to: [864, 529] },
]

const badges = [
  { n: 1, x: 489, y: 588 },
  { n: 2, x: 325, y: 106 },
  { n: 3, x: 725, y: 137 },
  { n: 4, x: 891, y: 482 },
]

function Annotations() {
  return (
    <div className="pointer-events-none absolute inset-0 z-30 overflow-hidden">
      <svg width="1000" height="620" className="absolute left-0 top-0 drop-shadow-[2px_3px_2px_rgba(0,0,0,0.45)]" aria-hidden="true">
        {arrows.map(({ from, to }, i) => {
          const dx = to[0] - from[0]
          const dy = to[1] - from[1]
          const angle = (Math.atan2(dy, dx) * 180) / Math.PI
          const len = Math.hypot(dx, dy)
          return (
            <path
              key={i}
              transform={`translate(${from[0]} ${from[1]}) rotate(${angle})`}
              d={`M0 -2H${len - 22}L${len - 26} -8L${len} 0L${len - 26} 8L${len - 22} 2H0Z`}
              fill="#ff0000"
              stroke="#a01010"
              strokeWidth={0.5}
            />
          )
        })}
      </svg>
      {badges.map(({ n, x, y }) => (
        <span
          key={n}
          style={{ left: x - 11, top: y - 11 }}
          className="absolute flex size-[22px] items-center justify-center rounded-full border-[3px] border-white bg-[#0000fa] font-['DejaVu_Sans',sans-serif] text-sm leading-none text-white shadow-[1px_2px_4px_rgba(0,0,0,0.6)]"
        >
          {n}
        </span>
      ))}
    </div>
  )
}

function Watermark() {
  return (
    <div className="pointer-events-none absolute bottom-2 right-2 z-30 flex items-center opacity-75">
      <svg width="42" height="46" viewBox="0 0 42 46" aria-hidden="true">
        <path d="M39 6C26-1 4 10 1 25c-1 6 1 9 4 11C4 22 16 9 39 6Z" fill="#3f8fd6" />
        <path d="M31 9C20 8 10 18 11 27c1 4 5 4 9 2-5 0-6-4-3-9 3-4 7-8 14-11Z" fill="#69aee3" />
        <path d="M25 15c8-3 16 1 16 8 0 11-14 22-38 22 17-3 30-12 31-20 0-5-3-8-9-10Z" fill="#4fb94c" />
        <path d="M30 19c3 4-1 11-9 16C15 39 9 41 4 41c11-3 26-12 26-22Z" fill="#c3d84e" />
      </svg>
      <div className="flex flex-col">
        <span className="text-[21px] font-bold leading-[24px] text-[#4a8fd0]">极光下载站</span>
        <span className="font-['Liberation_Sans',sans-serif] text-[18px] leading-[20px] text-[#45b854]">www.xz7.com</span>
      </div>
    </div>
  )
}

export default function App() {
  return (
    <div className="relative flex h-screen flex-col overflow-hidden bg-[#ede4e1] bg-[radial-gradient(ellipse_at_5%_18%,#e5e7de_0%,#e9e5df_18%,transparent_36%),radial-gradient(ellipse_at_76%_4%,#e3e4e1_0%,transparent_26%),radial-gradient(ellipse_at_92%_22%,#e8e4e1_0%,transparent_34%)] font-['Open_Sans','Noto_Sans_CJK_SC',sans-serif]">
      <TitleBar />
      <MenuBar />
      <Ribbon />
      <main className="flex min-h-0 flex-1">
        <VerticalRuler />
        <Document />
        <Scrollbar />
        <StylePanel />
        <SideBar />
      </main>
      <StatusBar />
      <Annotations />
      <Watermark />
    </div>
  )
}
